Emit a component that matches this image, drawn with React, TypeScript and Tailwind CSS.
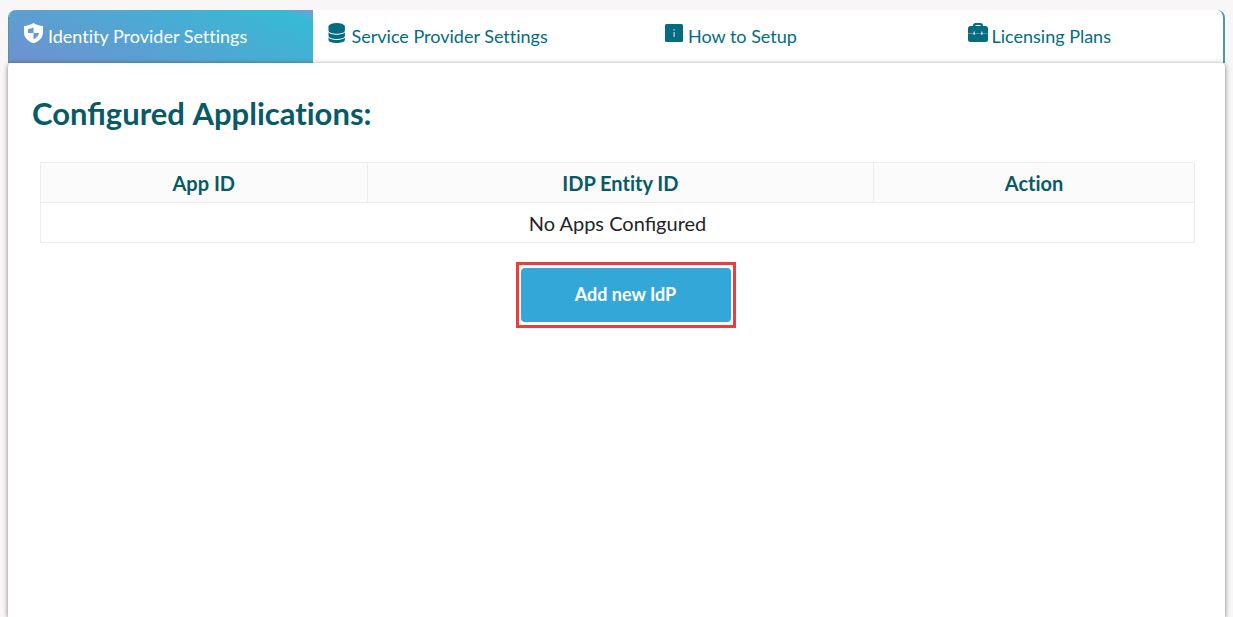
import type { ReactNode } from 'react';
import clsx from 'clsx';

function ShieldIcon() {
  return (
    <svg viewBox="0 0 20 22" className="h-[22px] w-5" aria-hidden="true">
      <path
        fill="currentColor"
        fillRule="evenodd"
        d="M9.500 1c3 1.900 6 2.700 9.500 3v6.200c0 5.200-3.600 9-9.500 11C3.700 19.200 0 15.400 0 10.200V4C3.500 3.700 6.500 2.900 9.500 1Zm0 4.300C8 6.200 6 6.900 4 7.100V11h5.500V5.300ZM9.500 11v6.300c3-1.200 5-3.300 5.500-6.300H9.500Z"
      />
    </svg>
  );
}

function DatabaseIcon() {
  return (
    <svg viewBox="0 0 20 22" className="h-[22px] w-5" aria-hidden="true">
      <g fill="currentColor">
        <ellipse cx="8.700" cy="4.500" rx="8.200" ry="3.500" />
        <path d="M.5 4.500v4c0 4.400 16.400 4.400 16.400 0v-4z" />
        <path d="M.5 10v3.800c0 4.300 16.400 4.300 16.400 0V10c-1.700 3.600-14.700 3.600-16.400 0Z" />
        <path d="M.5 15.300v2.400c0 4.300 16.400 4.300 16.400 0v-2.400c-1.700 3.600-14.700 3.600-16.400 0Z" />
      </g>
    </svg>
  );
}

function InfoIcon() {
  return (
    <svg viewBox="0 0 20 22" className="h-[22px] w-5" aria-hidden="true">
      <rect x="1" y="2" width="18" height="18" rx="1.500" fill="currentColor" />
      <path d="M9.500 7h1.200v1.600H9.500zM9.500 10h1.200v5H9.500z" fill="#fff" opacity=".75" />
    </svg>
  );
}

function BriefcaseIcon() {
  return (
    <svg viewBox="0 0 20 22" className="h-[22px] w-5" aria-hidden="true">
      <path
        fill="currentColor"
        fillRule="evenodd"
        d="M7.500 1h5C14 1 15 2 15 3.300V4h2.500A2.500 2.500 0 0 1 20 6.500v11a2.500 2.500 0 0 1-2.500 2.500h-15A2.500 2.500 0 0 1 0 17.500v-11A2.500 2.500 0 0 1 2.500 4H5v-.7C5 2 6 1 7.500 1Zm0 2v1h5V3h-5Z"
      />
      <path d="M0 11.500h20" stroke="#fff" strokeWidth="1" opacity=".3" />
      <path d="M5.500 9.500h1.200v3.500H5.500zM13.300 9.500h1.200v3.500h-1.200z" fill="#fff" opacity=".85" />
    </svg>
  );
}

interface Tab {
  label: string;
  icon: ReactNode;
  active?: boolean;
  indent?: boolean;
}

const tabs: Tab[] = [
  { label: 'Identity Provider Settings', icon: <ShieldIcon />, active: true },
  { label: 'Service Provider Settings', icon: <DatabaseIcon /> },
  { label: 'How to Setup', icon: <InfoIcon />, indent: true },
  { label: 'Licensing Plans', icon: <BriefcaseIcon />, indent: true },
];

export default function App() {
  return (
    <div className="flex min-h-screen flex-col bg-[#f8f6f7] px-2 pt-[10px] font-['Lato',sans-serif]">
      <nav className="grid grid-cols-4 overflow-hidden rounded-t-lg border-r-2 border-l border-[#4a9ba5] bg-white [font-variant-ligatures:none]">
        {tabs.map((tab) => (
          <a
            key={tab.label}
            href="#"
            className={clsx(
              'flex h-[53px] items-start gap-1 pt-3 text-lg leading-7',
              tab.indent ? 'pl-12' : 'pl-[15px]',
              tab.active
                ? 'bg-[linear-gradient(21deg,#7090cf_0%,#36bad6_92%,#7a9bd8_100%)] text-white'
                : 'text-[#046c80]',
            )}
          >
            {tab.icon}
            <span>{tab.label}</span>
          </a>
        ))}
      </nav>

      <main className="relative flex-1 rounded-t-sm bg-white px-6 pt-7 shadow-[0_1px_5px_rgba(0,0,0,0.5)]">
        <h1 className="text-[31px] leading-[44px] font-bold text-[#085b66]">
          Configured <span className="[font-variant-ligatures:none]">Applications:</span>
        </h1>

        <div className="mt-[27px] pr-1.5 pl-2">
          <table className="w-full table-fixed border-collapse text-center text-xl leading-6">
            <thead className="bg-[#fbfbfb] text-[#085b66] [font-variant-ligatures:none]">
              <tr className="h-10">
                <th className="w-[28.3%] border border-[#ececec] font-bold">App ID</th>
                <th className="w-[43.9%] border border-[#ececec] font-bold">IDP Entity ID</th>
                <th className="border border-[#ececec] font-bold">Action</th>
              </tr>
            </thead>
            <tbody>
              <tr className="h-10">
                <td colSpan={3} className="border border-[#ececec] text-[#212529]">
                  No Apps Configured
                </td>
              </tr>
            </tbody>
          </table>
        </div>

        <div className="mt-[19px] flex justify-center pl-[18px]">
          <div className="border-[3px] border-[#ef3b3b] px-[2px] py-[3px]">
            <button
              type="button"
              className="h-[54px] w-[210px] rounded-sm bg-[#34a7d9] pb-0.5 text-lg font-bold text-white"
            >
              Add new IdP
            </button>
          </div>
        </div>
      </main>
    </div>
  );
}
